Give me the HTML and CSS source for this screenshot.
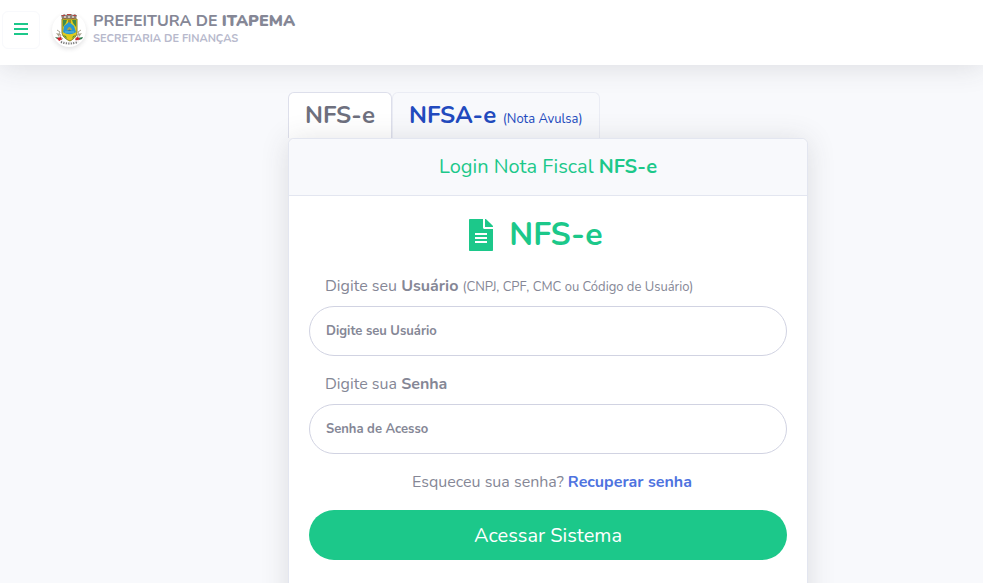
FILE: index.html
```
<!DOCTYPE html>
<html lang="pt-br">
<head>
    <meta charset="UTF-8">
    <meta name="viewport" content="width=device-width, initial-scale=1.0">
    <title>Prefeitura de Itapema - NFS-e</title>
    <link rel="stylesheet" href="styles.css">
</head>
<body>

    <header class="topbar">
        <button type="button" class="menu-btn" aria-label="Menu">
            <svg viewBox="0 0 14 14" width="14" height="14">
                <path d="M0 0h14v2H0zM0 5h14v2H0zM0 10h14v2H0z" fill="currentColor"/>
            </svg>
        </button>
        <a class="brand" href="#">
            <span class="brand-logo">
                <svg viewBox="0 0 34 34" width="34" height="34">
                    <!-- coroa -->
                    <path d="M9 2l2 0 1-1 2 1 2-1h3l2 1 2-1 1 1h1l-1 4H10z" fill="#8d8079"/>
                    <path d="M10 2h3v1h-3zM15 1h4v1h-4zM21 2h3v1h-3zM12 5h2v1h-2zM20 5h2v1h-2z" fill="#b8433f"/>
                    <path d="M12 3h2v2h-2zM16 3h2v2h-2zM20 3h2v2h-2z" fill="#c9c2bb"/>
                    <!-- ramos -->
                    <path d="M5 17l3 2-1 2 2 1-1 2 3 2M29 17l-3 2 1 2-2 1 1 2-3 2" fill="none" stroke="#aaa492" stroke-width="1"/>
                    <path d="M4 20l4 1-1 3zM30 20l-4 1 1 3z" fill="#a9a28e"/>
                    <path d="M3 24l5 1 1 2-4-1zM31 24l-5 1 1 2 3-1z" fill="#2f7a4d"/>
                    <path d="M5 25l4-1 1 3-3 1zM28 25l-3-1-2 3 3 1z" fill="#d3222f"/>
                    <!-- escudo -->
                    <path d="M10 6h15v13c0 4-3 7-7 9-5-2-8-5-8-9z" fill="#e0cb1e" stroke="#87802d"/>
                    <path d="M11 7h4l-1 3-3 4zM24 7h-4l1 3 3 4z" fill="#3f8b48"/>
                    <path d="M16 7h3v3h-3z" fill="#a28a26"/>
                    <path d="M17 9l5 4 2 6c-4 3-9 3-13 0l1-6z" fill="#2897d3"/>
                    <path d="M15 17c1-4 4-4 5 0z" fill="#a8a54e"/>
                    <path d="M16 18c1-2 2-2 3 0z" fill="#31758f"/>
                    <path d="M13 19h9" stroke="#62b9d9" fill="none"/>
                    <path d="M11 22l3 1 1 3zM24 22l-3 1-1 3z" fill="#47903f"/>
                    <!-- faixa -->
                    <path d="M8 28q9 5 19 0" fill="none" stroke="#f4f4f4" stroke-width="3"/>
                    <path d="M9 29q8 3 17 0" fill="none" stroke="#666" stroke-width="2" stroke-dasharray="1 1.5"/>
                </svg>
            </span>
            <span class="brand-text">
                <span class="brand-title">PREFEITURA DE <b>ITAPEMA</b></span>
                <span class="brand-sub">SECRETARIA DE FINANÇAS</span>
            </span>
        </a>
    </header>

    <main class="content">
        <div class="login">
            <nav class="tabs">
                <a class="tab active" href="#nfse">NFS-e</a>
                <a class="tab" href="#nfsae">NFSA-e <small>(Nota Avulsa)</small></a>
            </nav>

            <div class="card" id="nfse">
                <div class="card-header">Login Nota Fiscal <b>NFS-e</b></div>
                <form class="card-body">
                    <h1>
                        <svg viewBox="0 0 384 512" width="24" height="32">
                            <path fill="currentColor" d="M224 136V0H12C5 0 0 5 0 12v488c0 7 5 12 12 12h360c7 0 12-5 12-12V160H248c-13 0-24-11-24-24zm64 248H96v-32h192zm0-64H96v-32h192zm0-64H96v-32h192zM384 122v6H256V0h6c6 0 13 3 17 7l98 98c4 4 7 11 7 17z"/>
                        </svg>
                        NFS-e
                    </h1>

                    <label for="usuario">Digite seu <b>Usuário</b> <small>(CNPJ, CPF, CMC ou Código de Usuário)</small></label>
                    <input type="text" id="usuario" placeholder="Digite seu Usuário">

                    <label for="senha">Digite sua <b>Senha</b></label>
                    <input type="password" id="senha" placeholder="Senha de Acesso">

                    <p class="forgot">Esqueceu sua senha? <a href="#">Recuperar senha</a></p>

                    <button type="submit" class="btn-login">Acessar Sistema</button>
                </form>
            </div>
        </div>
    </main>

</body>
</html>
```
FILE: styles.css
```
* {
    box-sizing: border-box;
    margin: 0;
    padding: 0;
}

body {
    font-family: Nunito, Lato, sans-serif;
    font-size: 16px;
    line-height: 24px;
    color: #858796;
    background: #f8f9fc;
    height: 100vh;
    overflow: hidden;
}

a {
    text-decoration: none;
}

small {
    font-size: 13px;
    font-weight: 400;
    line-height: 16px;
}

/* Topbar */
.topbar {
    display: flex;
    align-items: center;
    gap: 12px;
    padding: 11px 2px 16px;
    background: #fff;
    box-shadow: 0 2px 28px rgba(58, 59, 69, 0.15);
}

.menu-btn {
    display: flex;
    align-items: center;
    justify-content: center;
    width: 38px;
    height: 38px;
    color: #1cc88a;
    background: #fff;
    border: 1px solid #f8f9fc;
    border-radius: 6px;
    cursor: pointer;
}

.brand {
    display: flex;
    align-items: center;
    gap: 7px;
    color: #858796;
}

.brand-logo {
    display: flex;
    border-radius: 50%;
    box-shadow: 0 2px 4px rgba(58, 59, 69, 0.15);
}

.brand-text {
    display: flex;
    flex-direction: column;
    padding-bottom: 2px;
}

.brand-title {
    font-weight: 700;
    line-height: 20px;
}

.brand-title b {
    font-weight: 900;
}

.brand-sub {
    font-size: 11px;
    font-weight: 700;
    line-height: 16px;
    color: #b7b9cc;
}

/* Login */
.content {
    padding: 27px 0 24px 113px;
}

.login {
    max-width: 520px;
    margin: 0 auto;
}

.tabs {
    display: flex;
}

.tab {
    height: 46px;
    padding: 8px 16px;
    font-size: 24px;
    font-weight: 700;
    line-height: 28px;
    color: #224abe;
    border: 1px solid #eaecf4;
    border-bottom: 0;
    border-radius: 6px 6px 0 0;
}

.tab.active {
    color: #6e707e;
    background: #fff;
    border-color: #dddfeb;
}

.card {
    position: relative;
    background: #fff;
    border: 1px solid #e3e6f0;
    border-radius: 6px;
    box-shadow: 0 2px 28px rgba(58, 59, 69, 0.15);
}

.card-header {
    padding: 12px 20px;
    font-size: 20px;
    line-height: 32px;
    text-align: center;
    color: #1cc88a;
    background: #f8f9fc;
    border-bottom: 1px solid #e3e6f0;
    border-radius: 6px 6px 0 0;
}

.card-body {
    display: flex;
    flex-direction: column;
    padding: 20px 20px 48px;
}

.card-body h1 {
    display: flex;
    align-items: center;
    justify-content: center;
    gap: 16px;
    margin-bottom: 20px;
    padding-right: 24px;
    font-size: 32px;
    line-height: 38px;
    color: #1cc88a;
}

.card-body label {
    padding-left: 16px;
    margin-bottom: 8px;
}

.card-body input {
    height: 50px;
    padding: 0 16px;
    margin-bottom: 16px;
    font-family: inherit;
    font-size: 13px;
    font-weight: 700;
    color: #6e707e;
    background: #fff;
    border: 1px solid #d1d3e2;
    border-radius: 25px;
}

.card-body input::placeholder {
    color: #858796;
    opacity: 1;
}

.forgot {
    margin-bottom: 16px;
    padding-left: 8px;
    text-align: center;
}

.forgot a {
    font-weight: 700;
    color: #4e73df;
}

.btn-login {
    height: 50px;
    font-family: inherit;
    font-size: 20px;
    color: #fff;
    background: #1cc88a;
    border: 0;
    border-radius: 25px;
    cursor: pointer;
}
```
